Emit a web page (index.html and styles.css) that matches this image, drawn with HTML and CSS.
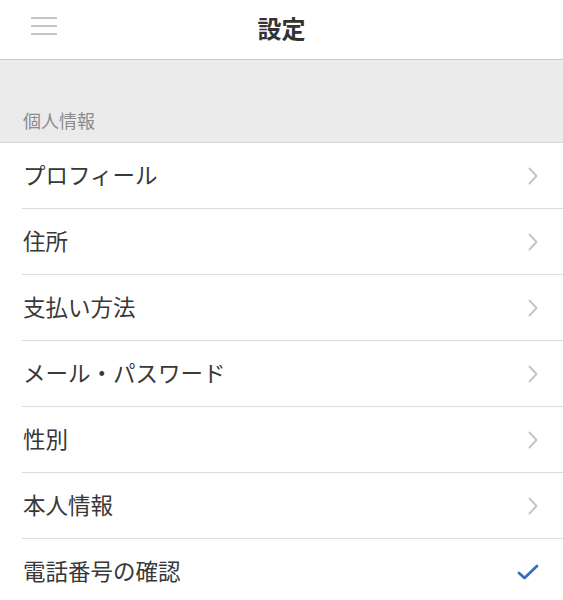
FILE: index.html
```html
<!DOCTYPE html>
<html lang="ja">
<head>
<meta charset="utf-8">
<title>設定</title>
<link rel="stylesheet" href="styles.css">
</head>
<body>
<div class="app">
  <header class="topbar">
    <button class="menu" aria-label="メニュー">
      <span></span><span></span><span></span>
    </button>
    <h1 class="title">設定</h1>
  </header>
  <div class="section-head">
    <span class="section-label">個人情報</span>
  </div>
  <ul class="list">
    <li class="row"><span class="row-text">プロフィール</span><svg class="chev" viewBox="0 0 10 18" width="10" height="18"><path d="M1.5 1.5 L8.5 9 L1.5 16.5" fill="none" stroke="#c4c4c8" stroke-width="1.9" stroke-linecap="round" stroke-linejoin="round"/></svg></li>
    <li class="row"><span class="row-text">住所</span><svg class="chev" viewBox="0 0 10 18" width="10" height="18"><path d="M1.5 1.5 L8.5 9 L1.5 16.5" fill="none" stroke="#c4c4c8" stroke-width="1.9" stroke-linecap="round" stroke-linejoin="round"/></svg></li>
    <li class="row"><span class="row-text">支払い方法</span><svg class="chev" viewBox="0 0 10 18" width="10" height="18"><path d="M1.5 1.5 L8.5 9 L1.5 16.5" fill="none" stroke="#c4c4c8" stroke-width="1.9" stroke-linecap="round" stroke-linejoin="round"/></svg></li>
    <li class="row"><span class="row-text">メール・パスワード</span><svg class="chev" viewBox="0 0 10 18" width="10" height="18"><path d="M1.5 1.5 L8.5 9 L1.5 16.5" fill="none" stroke="#c4c4c8" stroke-width="1.9" stroke-linecap="round" stroke-linejoin="round"/></svg></li>
    <li class="row"><span class="row-text">性別</span><svg class="chev" viewBox="0 0 10 18" width="10" height="18"><path d="M1.5 1.5 L8.5 9 L1.5 16.5" fill="none" stroke="#c4c4c8" stroke-width="1.9" stroke-linecap="round" stroke-linejoin="round"/></svg></li>
    <li class="row"><span class="row-text">本人情報</span><svg class="chev" viewBox="0 0 10 18" width="10" height="18"><path d="M1.5 1.5 L8.5 9 L1.5 16.5" fill="none" stroke="#c4c4c8" stroke-width="1.9" stroke-linecap="round" stroke-linejoin="round"/></svg></li>
    <li class="row"><span class="row-text">電話番号の確認</span><svg class="check" viewBox="0 0 22 16" width="22" height="16"><path d="M2 9 L7.5 14 L20 2" fill="none" stroke="#3a6cc0" stroke-width="2.8" stroke-linecap="round" stroke-linejoin="round"/></svg></li>
  </ul>
</div>
</body>
</html>
```
FILE: styles.css
```css
* { box-sizing: border-box; }
html, body {
  margin: 0;
  padding: 0;
  background: #ffffff;
  font-family: "Noto Sans CJK JP", "Noto Sans", sans-serif;
  color: #333333;
}
.app {
  width: 563px;
}
.topbar {
  height: 60px;
  border-bottom: 1px solid #c9c9c9;
  display: flex;
  align-items: center;
  justify-content: center;
  position: relative;
  background: #fff;
}
.menu {
  position: absolute;
  left: 31px;
  top: 17px;
  width: 26px;
  height: 18px;
  padding: 0;
  border: 0;
  background: transparent;
  display: flex;
  flex-direction: column;
  justify-content: space-between;
}
.menu span {
  display: block;
  height: 2px;
  background: #c6c6ca;
}
.title {
  margin: 0;
  font-size: 24px;
  font-weight: 700;
  color: #333;
  line-height: 1;
  padding-bottom: 4px;
}
.section-head {
  height: 83px;
  background: #ebebeb;
  border-bottom: 1px solid #d6d6d6;
  display: flex;
  align-items: flex-end;
  padding: 0 0 10px 23px;
}
.section-label {
  font-size: 18px;
  line-height: 24px;
  color: #8b8b8b;
}
.list {
  list-style: none;
  margin: 0;
  padding: 0 0 0 22px;
}
.row {
  height: 66px;
  border-bottom: 1px solid #dcdcdc;
  display: flex;
  align-items: center;
  justify-content: space-between;
  padding: 0 25px 0 1px;
}
.row-text {
  font-size: 22.5px;
  line-height: 1;
  color: #383838;
  padding-bottom: 2px;
}
.chev {
  display: block;
}
.check {
  display: block;
  margin-right: -1px;
}
```
